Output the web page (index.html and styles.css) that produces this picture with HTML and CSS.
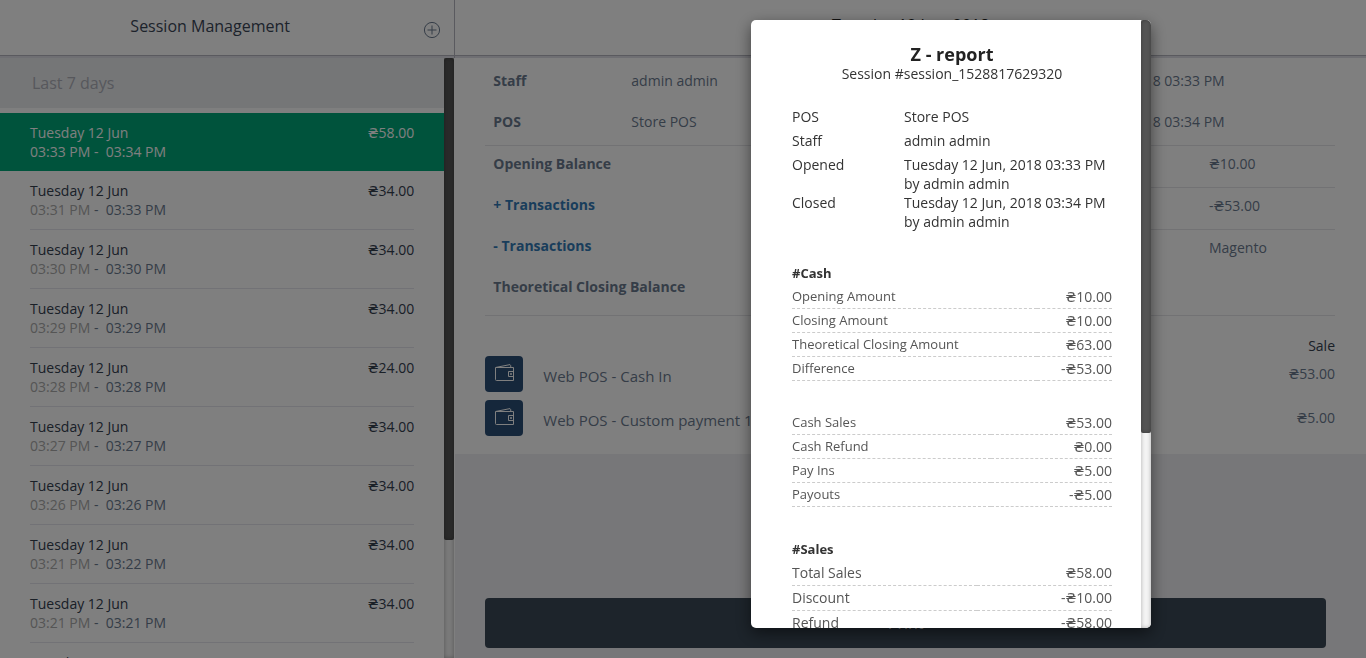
FILE: index.html
```html
<!DOCTYPE html>
<html lang="en">
<head>
<meta charset="utf-8">
<title>Session Management</title>
<link rel="stylesheet" href="styles.css">
</head>
<body>
<div class="app">
  <section class="sessions">
    <header class="bar">
      <h1 class="bar-title">Session Management</h1>
      <button class="add" type="button" aria-label="Add session">
        <svg width="18" height="18" viewBox="0 0 18 18" fill="none" stroke="currentColor"><circle cx="9" cy="9" r="7.6"/><path d="M9 4.5v9M4.5 9h9"/></svg>
      </button>
    </header>
    <div class="sessions-body">
      <div class="sessions-scroll">
        <h2 class="period">Last 7 days</h2>
        <ul class="list">
          <li class="item active"><div class="line"><span>Tuesday 12 Jun</span><span>₴58.00</span></div><div class="time"><span class="from">03:33 PM</span> -&nbsp; 03:34 PM</div></li>
          <li class="item"><div class="line"><span>Tuesday 12 Jun</span><span>₴34.00</span></div><div class="time"><span class="from">03:31 PM</span> -&nbsp; 03:33 PM</div></li>
          <li class="item"><div class="line"><span>Tuesday 12 Jun</span><span>₴34.00</span></div><div class="time"><span class="from">03:30 PM</span> -&nbsp; 03:30 PM</div></li>
          <li class="item"><div class="line"><span>Tuesday 12 Jun</span><span>₴34.00</span></div><div class="time"><span class="from">03:29 PM</span> -&nbsp; 03:29 PM</div></li>
          <li class="item"><div class="line"><span>Tuesday 12 Jun</span><span>₴24.00</span></div><div class="time"><span class="from">03:28 PM</span> -&nbsp; 03:28 PM</div></li>
          <li class="item"><div class="line"><span>Tuesday 12 Jun</span><span>₴34.00</span></div><div class="time"><span class="from">03:27 PM</span> -&nbsp; 03:27 PM</div></li>
          <li class="item"><div class="line"><span>Tuesday 12 Jun</span><span>₴34.00</span></div><div class="time"><span class="from">03:26 PM</span> -&nbsp; 03:26 PM</div></li>
          <li class="item"><div class="line"><span>Tuesday 12 Jun</span><span>₴34.00</span></div><div class="time"><span class="from">03:21 PM</span> -&nbsp; 03:22 PM</div></li>
          <li class="item"><div class="line"><span>Tuesday 12 Jun</span><span>₴34.00</span></div><div class="time"><span class="from">03:21 PM</span> -&nbsp; 03:21 PM</div></li>
          <li class="item"><div class="line"><span>Tuesday 12 Jun</span></div></li>
        </ul>
      </div>
      <div class="track"><div class="thumb thumb-sessions"></div></div>
    </div>
  </section>

  <main class="detail">
    <header class="bar">
      <h2 class="bar-title">Tuesday 12 Jun, 2018</h2>
    </header>
    <div class="panel">
      <dl class="info">
        <dt>Staff</dt><dd>admin admin</dd><dd>Tuesday 12 Jun, 2018 03:33 PM</dd>
        <dt>POS</dt><dd>Store POS</dd><dd>Tuesday 12 Jun, 2018 03:34 PM</dd>
      </dl>
      <div class="balance">
        <ul class="balance-labels">
          <li>Opening Balance</li>
          <li><a href="#in">+ Transactions</a></li>
          <li><a href="#out">- Transactions</a></li>
          <li>Theoretical Closing Balance</li>
        </ul>
        <ul class="balance-values">
          <li>₴10.00</li>
          <li>-₴53.00</li>
          <li>Magento</li>
        </ul>
      </div>
      <div class="sale-head">Sale</div>
      <ul class="payments">
        <li class="payment">
          <span class="wallet"><svg width="20" height="18" viewBox="0 0 20 18" fill="none" stroke="currentColor"><path d="M.5 3.500h18v13H1.500q-1 0-1-1zM1 3.400 15 .6q.8 0 .8 2.600M18.500 7.500h-5v5h5M16.500 9.500h-1v1h1z"/></svg></span>
          <span class="pay-name">Web POS - Cash In</span><span class="pay-sum">₴53.00</span>
        </li>
        <li class="payment">
          <span class="wallet"><svg width="20" height="18" viewBox="0 0 20 18" fill="none" stroke="currentColor"><path d="M.5 3.500h18v13H1.500q-1 0-1-1zM1 3.400 15 .6q.8 0 .8 2.600M18.500 7.500h-5v5h5M16.500 9.500h-1v1h1z"/></svg></span>
          <span class="pay-name">Web POS - Custom payment 1</span><span class="pay-sum">₴5.00</span>
        </li>
      </ul>
    </div>
    <div class="actions"><button class="print" type="button">Print</button></div>
  </main>
</div>

<div class="backdrop"></div>
<div class="modal" role="dialog" aria-labelledby="report-title">
  <div class="report">
    <h2 class="report-title" id="report-title">Z - report</h2>
    <p class="report-sub">Session #session_1528817629320</p>
    <dl class="meta">
      <dt>POS</dt><dd>Store POS</dd>
      <dt>Staff</dt><dd>admin admin</dd>
      <dt>Opened</dt><dd>Tuesday 12 Jun, 2018 03:33 PM<br>by admin admin</dd>
      <dt>Closed</dt><dd>Tuesday 12 Jun, 2018 03:34 PM<br>by admin admin</dd>
    </dl>
    <h3 class="group">#Cash</h3>
    <table class="sums">
      <tr><th scope="row">Opening Amount</th><td>₴10.00</td></tr>
      <tr><th scope="row">Closing Amount</th><td>₴10.00</td></tr>
      <tr><th scope="row">Theoretical Closing Amount</th><td>₴63.00</td></tr>
      <tr><th scope="row">Difference</th><td>-₴53.00</td></tr>
    </table>
    <table class="sums">
      <tr><th scope="row">Cash Sales</th><td>₴53.00</td></tr>
      <tr><th scope="row">Cash Refund</th><td>₴0.00</td></tr>
      <tr><th scope="row">Pay Ins</th><td>₴5.00</td></tr>
      <tr><th scope="row">Payouts</th><td>-₴5.00</td></tr>
    </table>
    <h3 class="group">#Sales</h3>
    <table class="sums sums-large">
      <tr><th scope="row">Total Sales</th><td>₴58.00</td></tr>
      <tr><th scope="row">Discount</th><td>-₴10.00</td></tr>
      <tr><th scope="row">Refund</th><td>-₴58.00</td></tr>
    </table>
  </div>
  <div class="track"><div class="thumb thumb-report"></div></div>
</div>
</body>
</html>
```
FILE: styles.css
```css
* { box-sizing: border-box; }
body {
  margin: 0;
  font: 14px/19px "Open Sans", "DejaVu Sans", sans-serif;
  color: #6b7a8f;
  background: #efeff2;
}
h1, h2, h3, p, ul, dl, dd { margin: 0; padding: 0; font-weight: 400; }
ul { list-style: none; }
button { font: inherit; border: 0; padding: 0; background: none; cursor: pointer; }
a { color: #337ab7; text-decoration: none; }

.app { display: grid; grid-template-columns: 1fr 2fr; height: 100vh; overflow: hidden; }

.bar {
  display: flex;
  flex: none;
  height: 58px;
  padding: 0 10px 3px 0;
  background: #fff;
  box-shadow: inset 0 -2px #dfdfe6, inset 0 -3px #b4b5be;
}
.bar-title { flex: 1; font-size: 16px; line-height: 22px; padding-top: 15px; text-align: center; color: #3a4657; }

/* session list */
.sessions { display: flex; flex-direction: column; min-height: 0; background: #fff; }
.sessions .bar { border-right: 1px solid #b4b5be; }
.add { display: flex; align-items: center; justify-content: center; width: 24px; height: 24px; margin-top: 18px; color: #6b7a8f; }
.sessions-body { display: flex; flex: 1; min-height: 0; padding-right: 1px; }
.sessions-scroll { flex: 1; overflow: hidden; }
.period { height: 50px; padding-left: 32px; margin-bottom: 5px; font-size: 16px; line-height: 50px; color: #aeb0b9; background: #ebecef; }
.item { padding: 10px 0 0; margin: 0 30px; border-bottom: 1px solid #e4e4ec; color: #34404f; }
.time { padding-bottom: 10px; color: #6b7a8f; }
.from { color: #aaa; }
.line { display: flex; justify-content: space-between; height: 19px; }
.item.active { margin: 0; padding: 10px 30px 0; border: 0; background: #00a679; }
.item.active, .active .time, .active .from { color: #fff; }

.track { flex: none; width: 10px; background: #f4f4f4; box-shadow: inset 0 0 4px rgba(0, 0, 0, .3); }
.thumb { border-radius: 2px; background: #555; box-shadow: inset 0 0 4px rgba(0, 0, 0, .3); }
.thumb-sessions { height: 80.4%; }
.thumb-report { height: 68%; }

/* session detail */
.detail { display: flex; flex-direction: column; min-width: 0; }
.detail > .bar { padding-right: 0; }
.detail .bar-title { line-height: 20px; color: #222; }
.panel { padding: 2px 31px 18px 30px; background: #fff; }
.info {
  display: grid;
  grid-template-columns: 138px 1fr 312px;
  padding: 0 0 3px 8px;
  line-height: 41px;
  border-bottom: 1px solid #e4e4e8;
}
.info dt, .balance-labels { font-weight: 700; }
.balance { display: grid; grid-template-columns: 1fr 1fr; padding-bottom: 5px; border-bottom: 1px solid #e4e4e8; }
.balance-labels { padding-left: 8px; line-height: 35px; }
.balance-labels li { height: 41px; }
.balance-values { line-height: 35px; }
.balance-values li { height: 42px; padding-left: calc(100% - 126px); border-bottom: 1px solid #e4e4e8; }
.balance-values li:last-child { border: 0; }
.sale-head { padding: 20px 0 1px; text-align: right; color: #34404f; }
.payments { display: grid; gap: 8px; }
.payment { display: flex; height: 36px; }
.wallet { display: flex; align-items: center; justify-content: center; width: 38px; padding: 0 0 2px 2px; border-radius: 4px; color: #fff; background: #2b4f77; }
.pay-name { flex: 1; padding-left: 20px; font-size: 15px; line-height: 41px; }
.pay-sum { line-height: 36px; }
.actions { margin-top: auto; padding: 0 40px 10px 30px; }
.print { width: 100%; height: 50px; border-radius: 4px; font-size: 16px; color: #fff; background: #3a4856; }

/* report dialog */
.backdrop { position: fixed; inset: 0; background: rgba(0, 0, 0, .5); }
.modal {
  position: fixed;
  top: 20px;
  right: 215px;
  bottom: 30px;
  display: flex;
  width: 400px;
  overflow: hidden;
  border-radius: 5px;
  background: #fff;
  box-shadow: 0 5px 15px rgba(0, 0, 0, .5);
}
.report { flex: 1; padding: 24px 29px 0 41px; overflow: hidden; color: #333; }
.report-title { font-size: 18px; line-height: 20px; font-weight: 700; text-align: center; color: #222; }
.report-sub { line-height: 20px; text-align: center; }
.meta { display: grid; grid-template-columns: 112px 1fr; grid-auto-rows: minmax(24px, auto); margin: 23px 0 30px; }
.group { font-size: 13px; line-height: 24px; font-weight: 700; }
.sums { width: 100%; margin-bottom: 30px; border-spacing: 0; color: #555; }
.sums th, .sums td { height: 24px; padding: 0; line-height: 23px; border-bottom: 1px dashed #ccc; }
.sums th { font-size: 13px; font-weight: 400; text-align: left; }
.sums td { text-align: right; }
.sums-large th, .sums-large td { height: 25px; font-size: 14px; line-height: 24px; }
```
